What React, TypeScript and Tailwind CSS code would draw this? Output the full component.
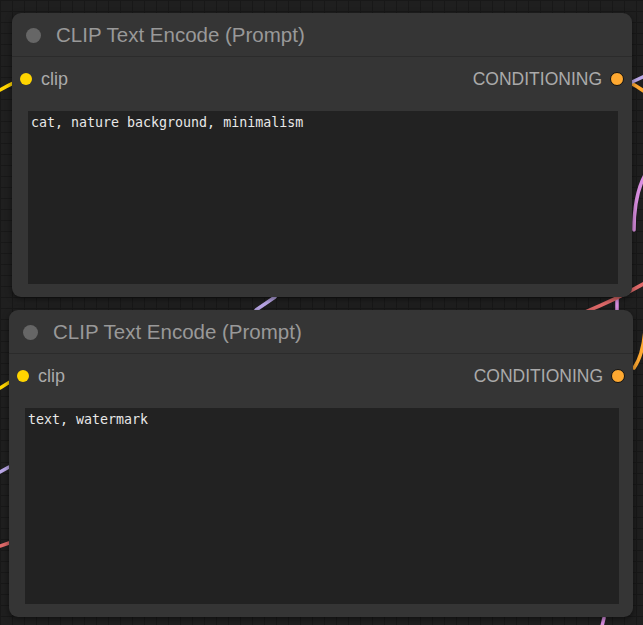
import React from 'react';

interface NodeProps {
    left: string;
    top: string;
    width: string;
    boxHeight: string;
    text: string;
}

const ClipNode: React.FC<NodeProps> = ({ left, top, width, boxHeight, text }) => (
    <div className={`absolute ${left} ${top} ${width} rounded-[9px] bg-[#353535] shadow-[0_2px_6px_rgba(0,0,0,0.5)]`}>
        {/* Title */}
        <div className="flex h-[44px] items-center border-b border-[#2b2b2b] pl-[14px] pt-[1px]">
            <span className="h-[15px] w-[15px] rounded-full bg-[#666]" />
            <span className="ml-[15px] text-[20.5px] text-[#999] font-['Liberation_Sans',Arial,sans-serif]">
                CLIP Text Encode (Prompt)
            </span>
        </div>

        {/* Slots */}
        <div className="flex h-[42px] items-center justify-between pl-[8px] pr-[8px] pt-[2px] font-['Liberation_Sans',Arial,sans-serif] text-[18px] text-[#aaa]">
            <div className="flex items-center">
                <span className="h-[12px] w-[12px] rounded-full bg-[#ffd500]" />
                <span className="ml-[9px]">clip</span>
            </div>
            <div className="flex items-center">
                <span className="text-[17.5px]">CONDITIONING</span>
                <span className="ml-[8px] h-[14px] w-[14px] rounded-full border-[1.5px] border-[#111] bg-[#ffa931]" />
            </div>
        </div>

        {/* Prompt box */}
        <div className="mt-[12px] ml-[16px] mr-[14px] mb-[13px]">
            <div className={`${boxHeight} bg-[#222] px-[3px] pt-[4px] whitespace-pre font-['DejaVu_Sans_Mono',monospace] text-[13.3px] leading-[16px] text-[#e8e8e8]`}>
                {text}
            </div>
        </div>
    </div>
);

export default function App() {
    return (
        <div className="relative h-[625px] w-[643px] overflow-hidden bg-[#1f1f1f] bg-[linear-gradient(#181818_1px,transparent_1px),linear-gradient(90deg,#181818_1px,transparent_1px)] bg-[size:12px_11px]">
            {/* Links */}
            <svg className="absolute inset-0" width="643" height="625" fill="none" strokeWidth="3.5" strokeLinecap="round">
                <path d="M0 90 Q14 82 26 78" stroke="#ffd500" />
                <path d="M0 388 Q12 380 23 375" stroke="#ffd500" />
                <path d="M617 78 Q632 82 645 92" stroke="#ffa931" />
                <path d="M632 82 L645 76" stroke="#b9a6e6" />
                <path d="M645 175 Q634 195 634 230" stroke="#d98ee0" />
                <path d="M617 297 L617 312" stroke="#d98ee0" />
                <path d="M585 312 Q615 300 645 283" stroke="#e06a6a" />
                <path d="M256 310 L275 297" stroke="#b9a6e6" />
                <path d="M634 368 Q643 355 645 330" stroke="#ffa931" />
                <path d="M0 472 L9 467" stroke="#b9a6e6" />
                <path d="M0 546 L9 543" stroke="#e06a6a" />
                <path d="M601 630 L604 618" stroke="#d98ee0" />
            </svg>

            <ClipNode
                left="left-[12px]"
                top="top-[13px]"
                width="w-[620px]"
                boxHeight="h-[173px]"
                text="cat, nature background, minimalism"
            />
            <ClipNode
                left="left-[9px]"
                top="top-[310px]"
                width="w-[624px]"
                boxHeight="h-[196px]"
                text="text, watermark"
            />
        </div>
    );
}
